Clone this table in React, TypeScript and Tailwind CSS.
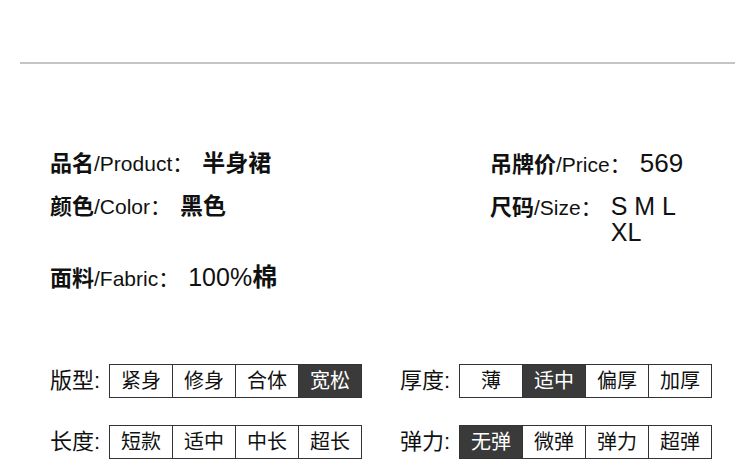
const cjk = "font-['Liberation_Sans','Noto_Sans_CJK_SC',sans-serif]";

type Opt = { label: string; items: string[]; active: number };

const optionRows: Opt[][] = [
  [
    { label: '版型:', items: ['紧身', '修身', '合体', '宽松'], active: 3 },
    { label: '厚度:', items: ['薄', '适中', '偏厚', '加厚'], active: 1 },
  ],
  [
    { label: '长度:', items: ['短款', '适中', '中长', '超长'], active: -1 },
    { label: '弹力:', items: ['无弹', '微弹', '弹力', '超弹'], active: 0 },
  ],
];

const InfoItem = ({ cn, en, children }: { cn: string; en: string; children: React.ReactNode }) => (
  <div className="flex items-baseline leading-[26px] text-[#111]">
    <span className="text-[22px] font-bold">{cn}</span>
    <span className="text-[21px]">/{en}</span>
    <span className="text-[21px] w-[30px]">：</span>
    {children}
  </div>
);

const OptionGroup = ({ label, items, active }: Opt) => (
  <div className="flex items-center">
    <span className="w-[59px] text-[22px] text-[#111] leading-none">{label}</span>
    <div className="flex">
      {items.map((item, i) => (
        <div
          key={item}
          className={`w-[64px] h-[34px] flex items-center justify-center border border-[#333] text-[20px] ${
            i > 0 ? '-ml-px' : ''
          } ${i === active ? 'bg-[#3a3a3a] text-white' : 'bg-white text-[#111]'}`}
        >
          {item}
        </div>
      ))}
    </div>
  </div>
);

export default function App() {
  return (
    <div className={`w-[750px] h-[470px] bg-white overflow-hidden ${cjk}`}>
      <div className="ml-[20px] mt-[62px] w-[715px] h-[2px] bg-[#c4c4c4]" />

      {/* product info */}
      <div className="mt-[86px] pl-[50px] flex flex-col">
        <div className="flex">
          <div className="w-[440px]">
            <InfoItem cn="品名" en="Product">
              <span className="text-[23px] font-bold">半身裙</span>
            </InfoItem>
          </div>
          <InfoItem cn="吊牌价" en="Price">
            <span className="text-[26px]">569</span>
          </InfoItem>
        </div>
        <div className="flex mt-[15px]">
          <div className="w-[440px]">
            <InfoItem cn="颜色" en="Color">
              <span className="text-[23px] font-bold">黑色</span>
            </InfoItem>
          </div>
          <InfoItem cn="尺码" en="Size">
            <span className="text-[25px] w-[84px]">S M L XL</span>
          </InfoItem>
        </div>
        <div className="mt-[19px]">
          <InfoItem cn="面料" en="Fabric">
            <span className="text-[25px]">
              100%<span className="font-bold">棉</span>
            </span>
          </InfoItem>
        </div>
      </div>

      {/* options */}
      <div className="mt-[72px] pl-[50px] flex flex-col gap-[27px]">
        {optionRows.map((row, r) => (
          <div key={r} className="flex">
            <div className="w-[350px]">
              <OptionGroup {...row[0]} />
            </div>
            <OptionGroup {...row[1]} />
          </div>
        ))}
      </div>
    </div>
  );
}
